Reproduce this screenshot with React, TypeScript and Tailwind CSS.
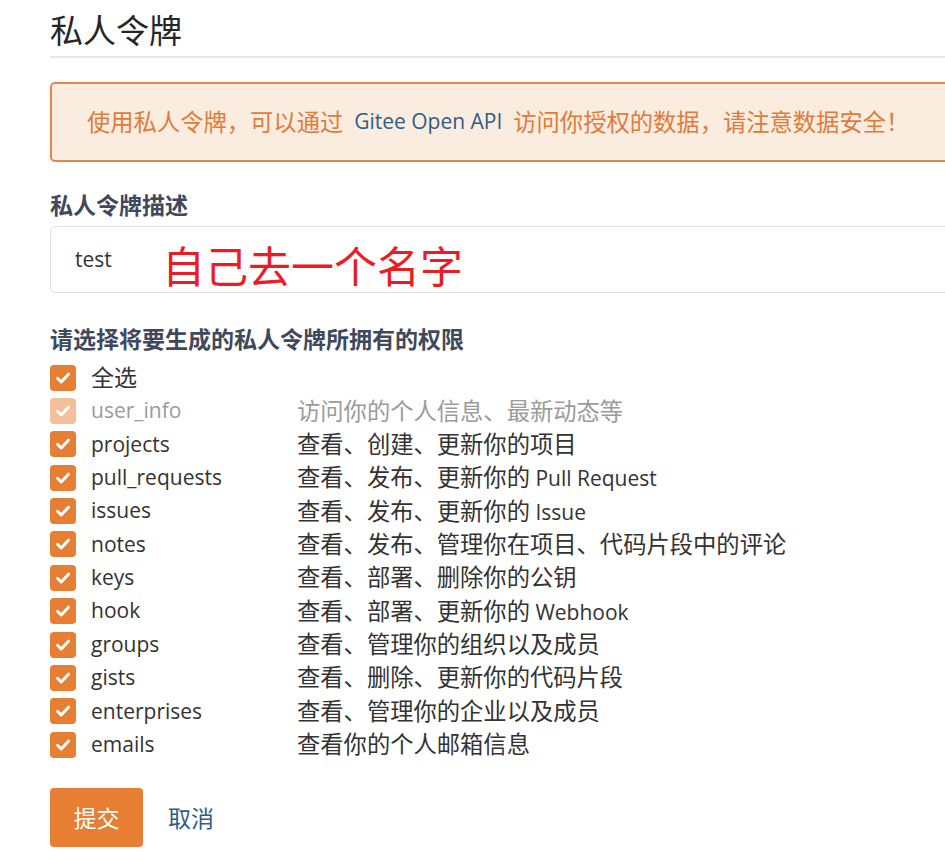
import React from "react";

const FONT = { fontFamily: '"Open Sans", "Noto Sans CJK SC", sans-serif' };

const SCOPES: { name: string; desc: string; locked?: boolean }[] = [
  { name: "user_info", desc: "访问你的个人信息、最新动态等", locked: true },
  { name: "projects", desc: "查看、创建、更新你的项目" },
  { name: "pull_requests", desc: "查看、发布、更新你的 Pull Request" },
  { name: "issues", desc: "查看、发布、更新你的 Issue" },
  { name: "notes", desc: "查看、发布、管理你在项目、代码片段中的评论" },
  { name: "keys", desc: "查看、部署、删除你的公钥" },
  { name: "hook", desc: "查看、部署、更新你的 Webhook" },
  { name: "groups", desc: "查看、管理你的组织以及成员" },
  { name: "gists", desc: "查看、删除、更新你的代码片段" },
  { name: "enterprises", desc: "查看、管理你的企业以及成员" },
  { name: "emails", desc: "查看你的个人邮箱信息" },
];

// CJK runs are set a bit larger than the Latin ones, like the YaHei/Segoe mix
function Mixed({ text }: { text: string }) {
  const parts = text.split(/([\u3000-\u9fff\uff00-\uffef]+)/);
  return (
    <>
      {parts.map((p, i) =>
        /[\u3000-\u9fff\uff00-\uffef]/.test(p) ? (
          <span key={i} className="text-[23.3px]">{p}</span>
        ) : (
          <React.Fragment key={i}>{p}</React.Fragment>
        )
      )}
    </>
  );
}

function CheckBox({ faded }: { faded?: boolean }) {
  return (
    <span
      className={
        "flex h-[26px] w-[26px] shrink-0 items-center justify-center rounded-[4px] " +
        (faded ? "bg-[#f3c09b]" : "bg-[#e67e33]")
      }
    >
      <svg width="16" height="16" viewBox="0 0 16 16" fill="none">
        <path d="M2.5 8.3 L6.2 12 L13.5 4.2" stroke="#fff" strokeWidth="3" strokeLinecap="round" strokeLinejoin="round" />
      </svg>
    </span>
  );
}

export default function App() {
  return (
    <div className="h-[852px] w-[945px] overflow-hidden bg-white" style={FONT}>
      <div className="w-[1100px] pl-[50px]">
        {/* ── Header ───────────────────────── */}
        <h1 className="border-b-2 border-[#e8e8e8] pb-[7px] pt-[13px] text-[33px] font-normal leading-[36px] text-[#262626]">
          私人令牌
        </h1>

        {/* ── Alert ────────────────────────── */}
        <div className="mt-[24px] flex h-[80px] items-center whitespace-pre rounded-[5px] border-2 border-[#e3884b] bg-[#faede0] pl-[35px] text-[21px] text-[#e27a38]">
          <span className="text-[23.3px]">使用私人令牌，可以通过</span>
          <span className="text-[#2f5d87]">  Gitee Open API  </span>
          <span className="text-[23.3px]">访问你授权的数据，请注意数据安全！</span>
        </div>

        {/* ── Description ──────────────────── */}
        <div className="mt-[31px] text-[23px] font-bold leading-[24px] text-[#40485b]">私人令牌描述</div>
        <div className="mt-[9px] flex h-[67px] items-center rounded-[5px] border border-[#dcdfe6] pl-[24px]">
          <span className="w-[87px] text-[21px] text-[#333]">test</span>
          <span className="mt-[14px] text-[43px] leading-none text-[#ec1c24]">自己去一个名字</span>
        </div>

        {/* ── Scopes ───────────────────────── */}
        <div className="mt-[34px] text-[23px] font-bold leading-[24px] text-[#40485b]">
          请选择将要生成的私人令牌所拥有的权限
        </div>
        <div className="mt-[10px] flex flex-col">
          <div className="flex h-[33.36px] items-center text-[23px] text-[#333]">
            <CheckBox />
            <span className="ml-[15px]">全选</span>
          </div>
          {SCOPES.map((s) => (
            <div
              key={s.name}
              className={"flex h-[33.36px] items-center text-[21px] " + (s.locked ? "text-[#9b9b9b]" : "text-[#333]")}
            >
              <CheckBox faded={s.locked} />
              <span className="ml-[15px] w-[206px]">{s.name}</span>
              <span className="whitespace-pre">
                <Mixed text={s.desc} />
              </span>
            </div>
          ))}
        </div>

        {/* ── Actions ──────────────────────── */}
        <div className="mt-[27px] flex items-center">
          <button className="h-[59px] w-[93px] rounded-[4px] bg-[#e67e33] text-[23px] text-white">提交</button>
          <button className="ml-[25px] text-[23px] text-[#2f5d87]">取消</button>
        </div>
      </div>
    </div>
  );
}
